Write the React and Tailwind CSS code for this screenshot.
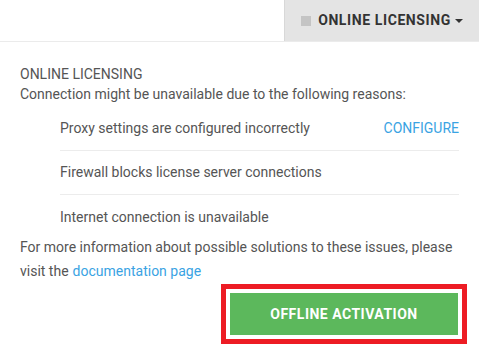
import React from 'react';

const reasons = [
  { text: 'Proxy settings are configured incorrectly', action: 'CONFIGURE' },
  { text: 'Firewall blocks license server connections' },
  { text: 'Internet connection is unavailable' },
];

const App = () => {
  return (
    <div className="w-[479px] h-[354px] bg-white overflow-hidden font-['Roboto',sans-serif] text-[#555]">
      {/* Header */}
      <header className="h-[42px] flex justify-end border-b border-[#ebebeb]">
        <button className="w-[195px] h-[41px] bg-[#e4e4e4] border-l border-[#d8d8d8] flex items-center justify-center gap-[7px] text-[14px] font-bold tracking-[0.6px] text-[#333]">
          <span className="w-[10px] h-[10px] bg-[#c4c4c4]" />
          <span>ONLINE LICENSING</span>
          <svg width="8" height="4" viewBox="0 0 8 4" className="ml-[-3px]">
            <path d="M0 0h8L4 4z" fill="#333" />
          </svg>
        </button>
      </header>

      {/* Body */}
      <div className="px-5 pt-[22px]">
        <p className="text-[14px] leading-[20px]">ONLINE LICENSING</p>
        <p className="text-[14px] leading-[20px]">Connection might be unavailable due to the following reasons:</p>

        <ul className="ml-10 w-[399px] mt-[3px]">
          {reasons.map((r, i) =>
            i < reasons.length - 1 ? (
              <li key={r.text} className="flex items-center justify-between h-[44px] text-[14px] border-b border-[#ececec]">
                <span>{r.text}</span>
                {r.action && <a className="text-[#3aa3e3]">{r.action}</a>}
              </li>
            ) : (
              <li key={r.text} className="flex items-start h-[36px] pt-[14px] text-[14px] leading-[16px]">
                <span>{r.text}</span>
              </li>
            )
          )}
        </ul>

        <div className="text-[14px] leading-[24px] mt-[4px]">
          <p>For more information about possible solutions to these issues, please</p>
          <p className="flex gap-[4px]">
            <span>visit the</span>
            <a className="text-[#3aa3e3]">documentation page</a>
          </p>
        </div>

        <div className="flex justify-end mt-[1px] mr-[-8px]">
          <div className="border-[5px] border-[#ed1c24] p-[4px]">
            <button className="w-[228px] h-[42px] bg-[#5cb85c] text-white text-[14px] font-bold tracking-[0.5px]">
              OFFLINE ACTIVATION
            </button>
          </div>
        </div>
      </div>
    </div>
  );
};

export default App;
